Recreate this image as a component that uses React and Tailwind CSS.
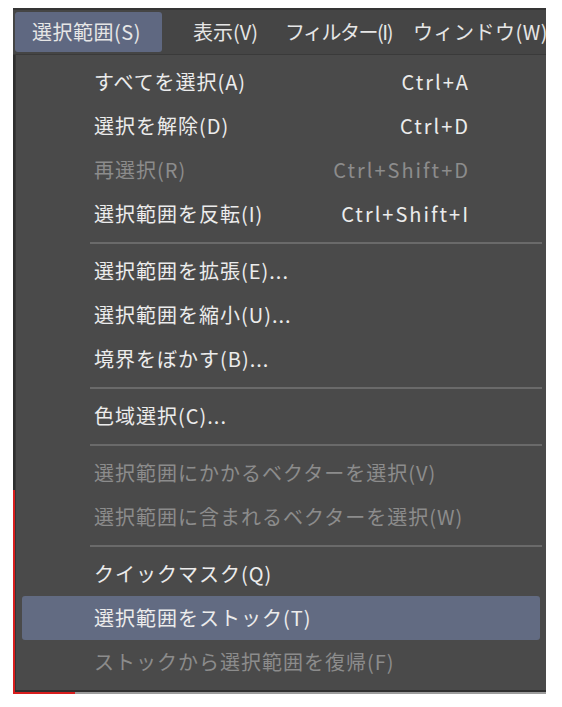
import React from "react";

const FONT = { fontFamily: '"Noto Sans CJK JP", "Noto Sans", sans-serif' };

// sep: true -> divider line
const ITEMS = [
  { label: "すべてを選択(A)", key: "Ctrl+A" },
  { label: "選択を解除(D)", key: "Ctrl+D" },
  { label: "再選択(R)", key: "Ctrl+Shift+D", disabled: true },
  { label: "選択範囲を反転(I)", key: "Ctrl+Shift+I" },
  { sep: true },
  { label: "選択範囲を拡張(E)..." },
  { label: "選択範囲を縮小(U)..." },
  { label: "境界をぼかす(B)..." },
  { sep: true },
  { label: "色域選択(C)..." },
  { sep: true },
  { label: "選択範囲にかかるベクターを選択(V)", disabled: true },
  { label: "選択範囲に含まれるベクターを選択(W)", disabled: true },
  { sep: true },
  { label: "クイックマスク(Q)" },
  { label: "選択範囲をストック(T)", active: true },
  { label: "ストックから選択範囲を復帰(F)", disabled: true },
];

const MenuRow = ({ item }) => (
  <div
    className={`mx-[6px] h-[44px] pl-[72px] pr-[70px] flex items-center justify-between rounded-[3px]
      ${item.active ? "bg-[#626b82]" : ""}
      ${item.disabled ? "text-[#8c8c8c]" : "text-[#ececec]"}
    `}
  >
    <span className="whitespace-nowrap tracking-[1px]">{item.label}</span>
    {item.key && <span className="whitespace-nowrap tracking-[2px]">{item.key}</span>}
  </div>
);

export default function App() {
  return (
    <div className="w-[562px] h-[707px] bg-white overflow-hidden pt-[8px]" style={FONT}>
      {/* menu bar */}
      <div className="ml-[13px] w-[533px] h-[47px] bg-[#454545] border-t-2 border-[#353535] border-b border-b-[#3a3a3a] flex items-center pl-[2px] overflow-hidden text-[20px] text-[#e6e6e6]">
        <div className="w-[147px] h-[40px] shrink-0 flex items-center pl-[17px] rounded-[3px] whitespace-nowrap bg-[#5f6881] tracking-[0.5px]">
          選択範囲(S)
        </div>
        <div className="w-[123px] h-[40px] shrink-0 flex items-center pl-[31px] whitespace-nowrap">
          表示(V)
        </div>
        <div className="w-[128px] h-[40px] shrink-0 flex items-center whitespace-nowrap tracking-[-1.5px]">
          フィルター(I)
        </div>
        <div className="w-[150px] h-[40px] shrink-0 flex items-center whitespace-nowrap tracking-[0.5px]">
          ウィンドウ(W)
        </div>
      </div>

      {/* dropdown */}
      <div className="ml-[13px] flex">
        <div className="flex flex-col w-[2px]">
          <div className="h-[435px] bg-[#2e2e2e]" />
          <div className="flex-1 bg-[#d81e1e]" />
        </div>
        <div className="w-[531px]">
          <div className="bg-[#4a4a4a] border-l border-[#383838] pt-[5px] pb-[6px] text-[20px] leading-none">
            {ITEMS.map((it, i) =>
              it.sep ? (
                <div key={i} className="h-[13px] flex items-center pl-[74px] pr-[4px]">
                  <div className="h-[2px] w-full bg-[#6a6a6a]" />
                </div>
              ) : (
                <MenuRow key={i} item={it} />
              )
            )}
          </div>
          <div className="h-[2px] bg-[#2f2f2f]" />
          <div className="flex h-[2px]">
            <div className="w-[60px] bg-[#d81e1e]" />
            <div className="flex-1 bg-[#9c9c9c]" />
          </div>
        </div>
      </div>
    </div>
  );
}
